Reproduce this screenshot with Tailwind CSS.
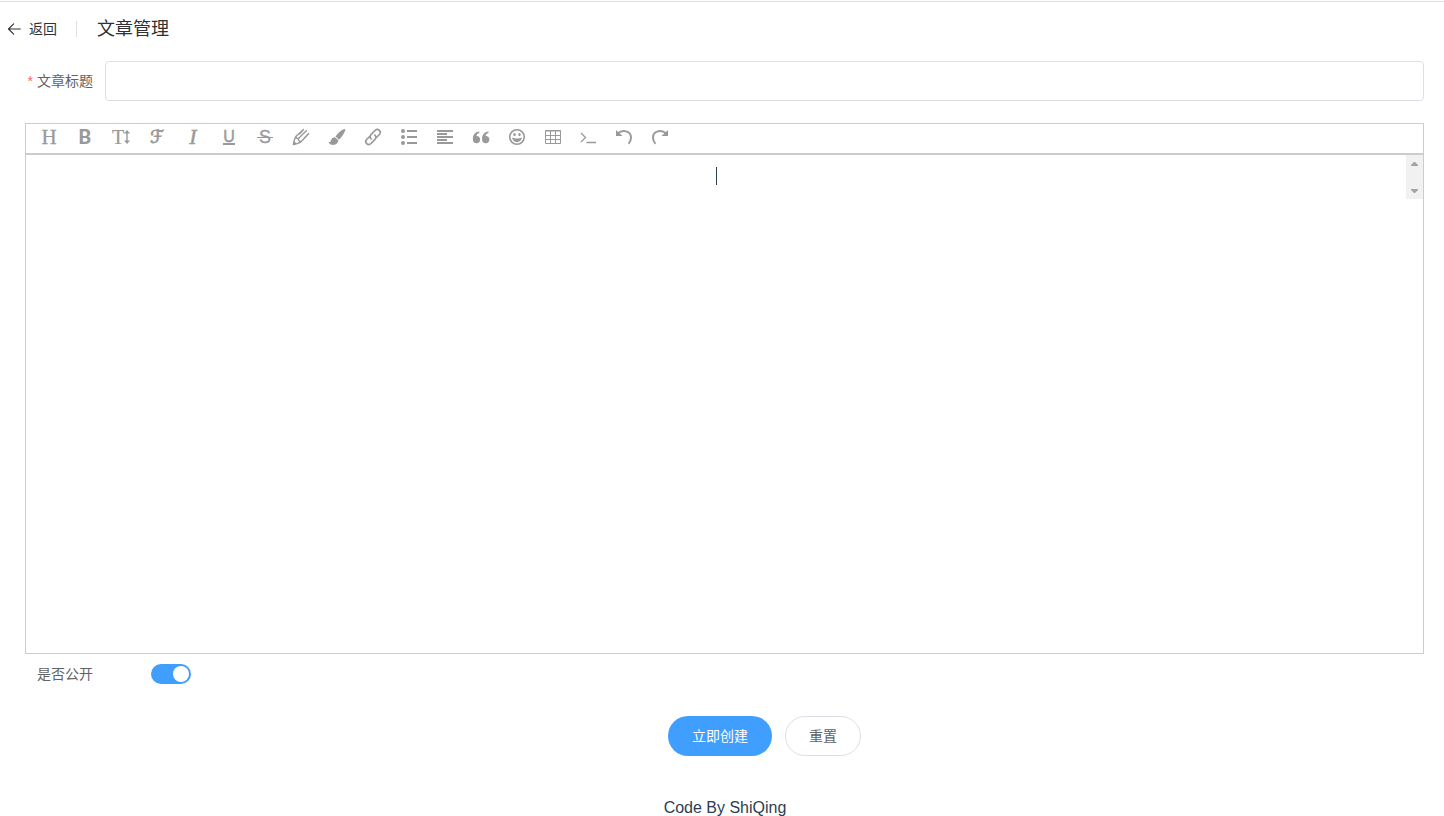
<!DOCTYPE html>
<html lang="zh-CN">
<head>
<meta charset="utf-8">
<meta name="viewport" content="width=device-width, initial-scale=1">
<title>文章管理</title>
<script src="https://cdn.jsdelivr.net/npm/@tailwindcss/browser@4"></script>
</head>
<body class="overflow-x-hidden bg-white font-['Liberation_Sans','Noto_Sans_CJK_SC',sans-serif] text-sm text-[#606266]">
<div class="mt-px border-t border-[#dcdfe6]">
  <header class="flex h-[54px] items-center pl-[7px] text-[#303133]">
    <button type="button" class="flex items-center gap-2 text-[#2c3e50]">
      <svg class="size-3.5" viewBox="0 0 14 14" fill="none" stroke="#303133" stroke-width="1.1" stroke-linecap="round" stroke-linejoin="round"><path d="M13.300 7H1.500M6.700 1.800L1.500 7l5.200 5.200"/></svg>
      <span class="text-[#303133]">返回</span>
    </button>
    <span class="mr-5 ml-[19px] h-4 w-px bg-[#dcdfe6]"></span>
    <h1 class="text-lg">文章管理</h1>
  </header>

  <form class="pr-5 pl-[25px] pt-[5px]">
    <div class="flex items-center">
      <label for="title" class="w-20 shrink-0 pr-3 text-right"><span class="mr-1 text-[#f56c6c]">*</span>文章标题</label>
      <input id="title" type="text" class="h-10 min-w-0 flex-1 rounded border border-[#dcdfe6] px-4 outline-none">
    </div>

    <div role="toolbar" aria-label="编辑工具" class="mt-[22px] flex h-[31px] border border-[#ccc] px-[5px] pb-[3px] text-[#999]">
      <button type="button" aria-label="标题" class="flex h-full w-9 items-center justify-center font-['Liberation_Serif',serif] text-[21px] leading-none [-webkit-text-stroke:0.3px_#999]">H</button>
      <button type="button" aria-label="粗体" class="flex h-full w-9 items-center justify-center font-['Roboto',sans-serif] text-xl leading-none font-bold">B</button>
      <button type="button" aria-label="字号" class="flex h-full w-9 items-center justify-center font-['Liberation_Serif',serif] text-xl leading-none [-webkit-text-stroke:0.2px_#999]">T<svg class="h-4 w-1.5" viewBox="0 0 6 16" fill="currentColor"><path d="M3 1l3 3.500H3.700v7H6L3 15l-3-3.500h2.300v-7H0z"/></svg></button>
      <button type="button" aria-label="字体" class="flex h-full w-9 items-center justify-center font-['DejaVu_Sans',sans-serif] text-lg leading-none [-webkit-text-stroke:0.8px_#999]">ℱ</button>
      <button type="button" aria-label="斜体" class="flex h-full w-9 items-center justify-center font-['Liberation_Serif',serif] text-[22px] leading-none italic [-webkit-text-stroke:0.5px_#999]">I</button>
      <button type="button" aria-label="下划线" class="flex h-full w-9 items-center justify-center"><span class="h-4 w-3 border-b-2 border-current text-center text-base leading-[15px] [-webkit-text-stroke:0.4px_#999]">U</span></button>
      <button type="button" aria-label="删除线" class="relative flex h-full w-9 items-center justify-center text-lg leading-none [-webkit-text-stroke:0.3px_#999]">S<span class="absolute inset-x-2.5 top-1/2 h-px bg-current"></span></button>
      <button type="button" aria-label="文字颜色" class="flex h-full w-9 items-center justify-center"><svg class="size-[18px]" viewBox="0 0 18 18" fill="none" stroke="currentColor" stroke-width="1.400" stroke-linejoin="round"><path d="M11.800 1.200L4 8.300C2.500 10 2.200 13 1.300 16.500c4-.800 6.500-1.500 8-3L17 5.200M14.800 2.300L6.500 10.500M4.200 8.300c-.300 1.500.500 2.400 2.300 2.200-.300 2 .700 3.300 2.800 3M11.800 1.200l-4.500 5M17 5.200l-5 5"/><path d="M1 17l1-4 2.800 2.800z" fill="currentColor" stroke="none"/></svg></button>
      <button type="button" aria-label="背景色" class="flex h-full w-9 items-center justify-center"><svg class="size-[18px]" viewBox="0 0 18 18" fill="currentColor"><path d="M16.200.900c1-.200 1.400.900.800 2.100-1.500 3.200-3.400 6.400-5.900 8.700L7.500 8.500C9.600 5.200 12.900 2 16.200.900zM6.900 9.300l3.400 3c.300 3.200-3.700 5.700-7.400 4.300C1.700 16 .800 15 .600 13.700c1 .700 2 .400 2.300-.900.300-2 1.800-3.500 4-3.500z"/></svg></button>
      <button type="button" aria-label="链接" class="flex h-full w-9 items-center justify-center"><svg class="size-[18px]" viewBox="0 0 18 18" fill="none" stroke="currentColor" stroke-width="1.700" stroke-linecap="round"><path d="M7.200 11c-1.400-1.300-1.400-3.200 0-4.600L11 2.500c3-2.800 7 1 4.400 4l-3 3M10.800 7c1.400 1.300 1.400 3.200 0 4.600L7 15.500c-3 2.800-7-1-4.400-4l3-3"/></svg></button>
      <button type="button" aria-label="列表" class="flex h-full w-9 items-center justify-center"><svg class="size-[18px]" viewBox="0 0 18 18" fill="currentColor"><circle cx="3" cy="3" r="2"/><circle cx="3" cy="9" r="2"/><circle cx="3" cy="15" r="2"/><path d="M7 2h10v2H7zM7 8h10v2H7zM7 14h10v2H7z"/></svg></button>
      <button type="button" aria-label="对齐方式" class="flex h-full w-9 items-center justify-center"><svg class="size-[18px]" viewBox="0 0 18 18" fill="currentColor"><path d="M1 2h16v2H1zM1 5h10v2H1zM1 8h16v2H1zM1 11h10v2H1zM1 14h16v2H1z"/></svg></button>
      <button type="button" aria-label="引用" class="flex h-full w-9 items-center justify-center"><svg class="size-[18px]" viewBox="0 0 18 18" fill="currentColor"><path d="M4.500 8a3.600 3.600 0 1 1-3.600 3.600C.700 7 3 4 7.300 3.600v1.300C5.500 5.200 4.500 6.500 4.500 8z"/><path d="M13.700 8a3.600 3.600 0 1 1-3.600 3.600C9.900 7 12.200 4 16.500 3.600v1.300c-1.800.300-2.800 1.600-2.800 3.100z"/></svg></button>
      <button type="button" aria-label="表情" class="flex h-full w-9 items-center justify-center"><svg class="size-[18px]" viewBox="0 0 18 18" fill="currentColor"><circle cx="9" cy="9" r="7.300" fill="none" stroke="currentColor" stroke-width="1.600"/><ellipse cx="6.500" cy="6.600" rx="1.200" ry="1.600"/><ellipse cx="11.500" cy="6.600" rx="1.200" ry="1.600"/><path d="M4 9.600c3 1.200 7 1.200 10 0-.400 2.700-2.300 4.700-5 4.700s-4.600-2-5-4.700z"/></svg></button>
      <button type="button" aria-label="表格" class="flex h-full w-9 items-center justify-center"><svg class="size-[18px]" viewBox="0 0 18 18" fill="none" stroke="currentColor"><path d="M1.500 2.500h15v13h-15zM1.500 7.500h15M1.500 11.500h15M6.500 2.500v13M11.500 2.500v13"/><path d="M1 3h16"/></svg></button>
      <button type="button" aria-label="代码" class="flex h-full w-9 items-center justify-center"><svg class="size-[18px]" viewBox="0 0 18 18" fill="none" stroke="currentColor" stroke-width="1.300"><path d="M1 5l4.500 4.500L1 14M6.500 14.500H16"/></svg></button>
      <button type="button" aria-label="撤销" class="flex h-full w-9 items-center justify-center"><svg class="size-[18px]" viewBox="0 0 18 18" fill="none" stroke="currentColor" stroke-width="2"><path d="M2 5.500c4.500-4.500 13-2.500 13 4 0 2.800-1 4.800-2.500 6.200"/><path d="M0 2v6h6.500z" fill="currentColor" stroke="none"/></svg></button>
      <button type="button" aria-label="重做" class="flex h-full w-9 items-center justify-center"><svg class="size-[18px]" viewBox="0 0 18 18" fill="none" stroke="currentColor" stroke-width="2"><path d="M14 5.500c-4.500-4.500-13-2.500-13 4 0 2.800 1 4.800 2.500 6.200"/><path d="M16 2v6H9.500z" fill="currentColor" stroke="none"/></svg></button>
    </div>

    <div class="h-[500px] border border-[#ccc]">
      <div class="flex h-11">
        <div role="textbox" aria-label="文章内容" contenteditable="true" class="flex-1 pt-3 outline-none"><span class="mx-auto block h-[18px] w-px bg-[#2c3e50]"></span></div>
        <div aria-hidden="true" class="flex w-[17px] flex-col items-center justify-between bg-[#f1f1f1] pt-[7px] pb-1.5 text-[#a3a3a3]">
          <svg class="h-1 w-[7px]" viewBox="0 0 7 4" fill="currentColor"><path d="M3 0h1l3 3v1H0V3z"/></svg>
          <svg class="h-1 w-[7px]" viewBox="0 0 7 4" fill="currentColor"><path d="M3 4h1l3-3V0H0v1z"/></svg>
        </div>
      </div>
    </div>

    <div class="flex h-10 items-center">
      <label for="public" class="w-20 shrink-0 pr-3 text-right">是否公开</label>
      <input id="public" type="checkbox" role="switch" checked class="ml-[46px] h-5 w-10 appearance-none rounded-full bg-[#dcdfe6] p-0.5 before:block before:size-4 before:rounded-full before:bg-white checked:bg-[#409eff] checked:before:ml-5">
    </div>

    <div class="mt-[22px] flex justify-center gap-[13px] pl-20">
      <button type="submit" class="h-10 rounded-full bg-[#409eff] px-6 text-white">立即创建</button>
      <button type="reset" class="h-10 rounded-full border border-[#dcdfe6] px-[23px]">重置</button>
    </div>
  </form>
  <footer class="mt-10 pl-1.5 text-center text-base text-[#2c3e50]">Code By ShiQing</footer>
</div>
</body>
</html>
